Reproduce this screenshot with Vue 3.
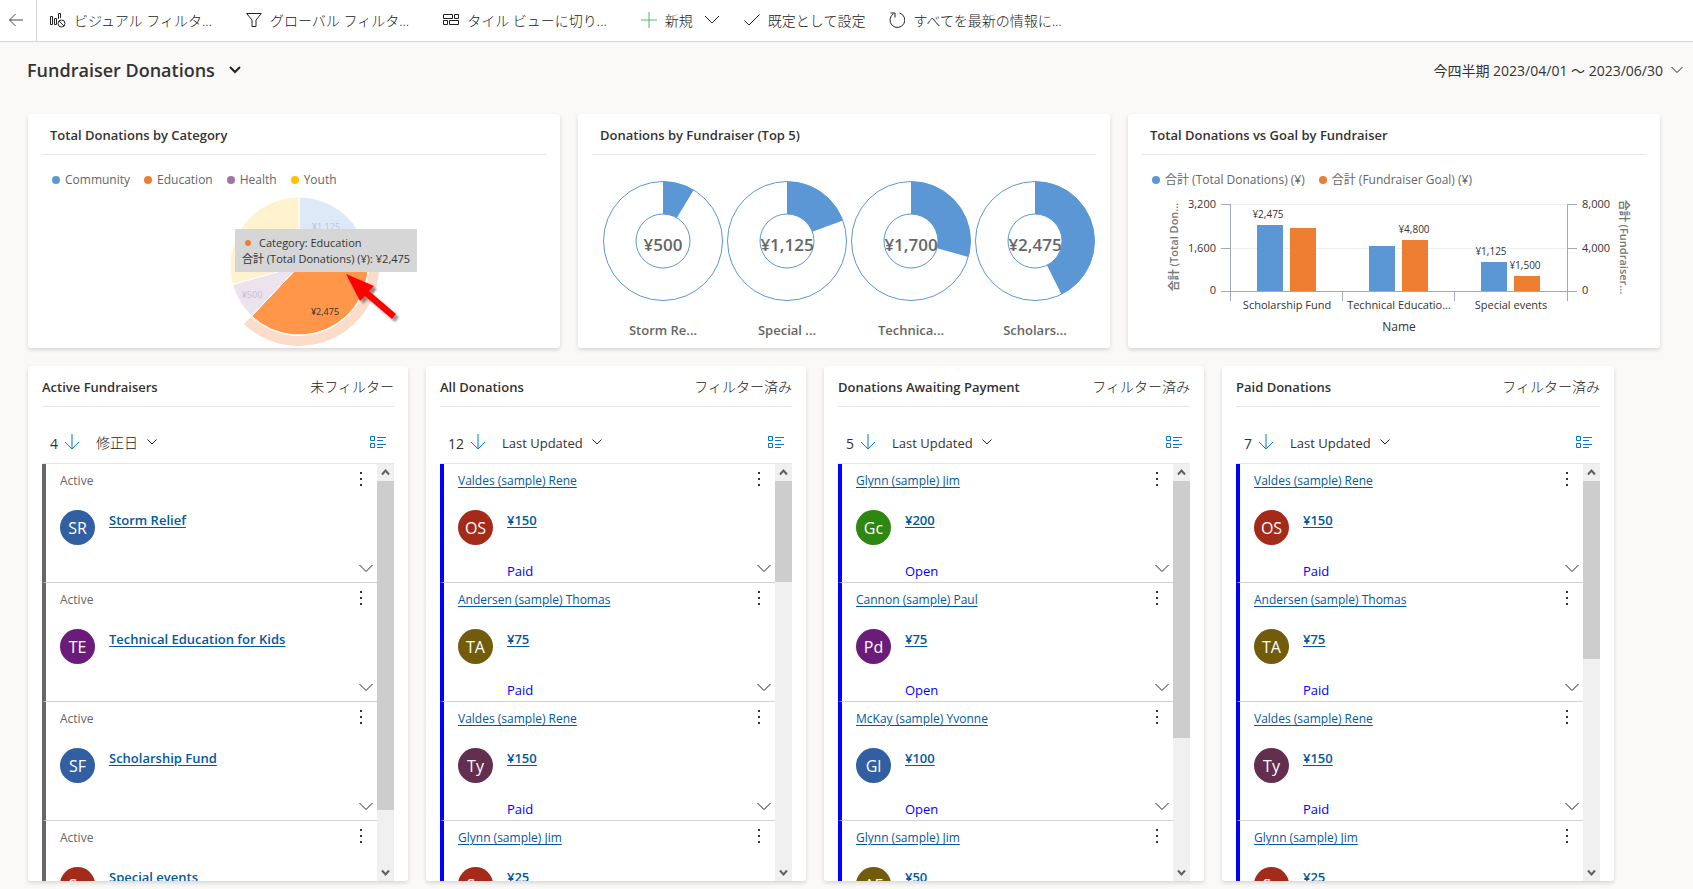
<template>
  <div class="dashboard">
    <nav class="command-bar">
      <button class="back-btn" aria-label="Back">
        <svg width="16" height="14" viewBox="0 0 16 14"><path d="M7.5 1 1.500 7l6 6M1.500 7H15" /></svg>
      </button>
      <button class="command wide">
        <svg width="16" height="16" viewBox="0 0 16 16">
          <path d="M.5 4.500h2v8h-2zM4.500 6.500h2v6h-2zM8.500 7V1.500h2V6" />
          <circle cx="11.500" cy="11.500" r="3.500" />
          <path d="m9 9 5 5" />
        </svg>
        ビジュアル フィルタ...
      </button>
      <button class="command wide">
        <svg width="16" height="16" viewBox="0 0 16 16"><path d="M.7 1.500h14.600L10 8v6.500H6V8z" /></svg>
        グローバル フィルタ...
      </button>
      <button class="command wide">
        <svg width="16" height="16" viewBox="0 0 16 16">
          <path d="M.5 2.500h9v4h-9zM11.500 2.500h4v4h-4zM.5 8.500h4v4h-4zM6.500 8.500h9v4h-9z" />
        </svg>
        タイル ビューに切り...
      </button>
      <button class="command">
        <svg class="plus" width="16" height="16" viewBox="0 0 16 16"><path d="M8 0v16M0 8h16" /></svg>
        新規
        <svg class="more" width="16" height="16" viewBox="0 0 16 16"><path d="m1 4 7 7 7-7" /></svg>
      </button>
      <button class="command">
        <svg width="16" height="16" viewBox="0 0 16 16"><path d="m.5 8.500 4.500 4.500L15.500 2.500" /></svg>
        既定として設定
      </button>
      <button class="command">
        <svg width="16" height="16" viewBox="0 0 16 16">
          <path d="M10.500 1a7.400 7.400 0 1 1-6 .8M1.500 1h4.500v4.500" />
        </svg>
        すべてを最新の情報に...
      </button>
    </nav>

    <header class="page-header">
      <button class="page-title">
        Fundraiser Donations
        <svg width="12" height="12" viewBox="0 0 12 12"><path d="m1 3 5 5 5-5" /></svg>
      </button>
      <button class="period">
        今四半期 2023/04/01 ～ 2023/06/30
        <svg width="12" height="12" viewBox="0 0 12 12"><path d="m.5 2 5.500 5.500L11.500 2" /></svg>
      </button>
    </header>

    <section class="charts">
      <article class="card">
        <h2 class="chart-title">Total Donations by Category</h2>
        <ul class="legend">
          <li v-for="item in categories" :key="item.name">
            <i :style="{ background: item.color }"></i>{{ item.name }}
          </li>
        </ul>
        <div class="pie">
          <svg width="100%" height="159" viewBox="0 0 532 159">
            <defs>
              <filter id="arrow-shadow" x="-20%" y="-20%" width="150%" height="150%">
                <feDropShadow dx="3" dy="3" stdDeviation="1" flood-color="#000" flood-opacity="0.4" />
              </filter>
            </defs>
            <path :d="ring(271, 77, 70, 80, 69.8, 223.4)" fill="#fbdccb" />
            <path
              v-for="slice in slices"
              :key="slice.name"
              :d="ring(271, 77, 0, 69, slice.from, slice.to)"
              :fill="slice.fill"
              stroke="#fff"
            />
            <text class="faded" x="298" y="41">¥1,125</text>
            <text class="faded" x="224" y="109">¥500</text>
            <text x="297" y="126">¥2,475</text>
            <g filter="url(#arrow-shadow)" fill="#f00">
              <path d="m318 85 28 12-5 5 27 23-4 5-27-23-5 5z" />
            </g>
          </svg>
          <div class="tooltip">
            <div class="tooltip-name"><i></i>Category: Education</div>
            <div>合計 (Total Donations) (¥): ¥2,475</div>
          </div>
        </div>
      </article>

      <article class="card">
        <h2 class="chart-title">Donations by Fundraiser (Top 5)</h2>
        <div class="donuts">
          <div v-for="donut in donuts" :key="donut.label" class="donut">
            <svg width="124" height="122" viewBox="0 0 124 122">
              <circle cx="62" cy="61" r="59.500" />
              <circle cx="62" cy="61" r="27" />
              <path :d="ring(62, 61, 27, 59.5, 0, (donut.value / total) * 360)" />
              <text x="62" y="71">{{ yen(donut.value) }}</text>
            </svg>
            <span>{{ donut.label }}</span>
          </div>
        </div>
      </article>

      <article class="card">
        <h2 class="chart-title">Total Donations vs Goal by Fundraiser</h2>
        <ul class="legend">
          <li><i class="blue"></i>合計 (Total Donations) (¥)</li>
          <li><i class="orange"></i>合計 (Fundraiser Goal) (¥)</li>
        </ul>
        <svg class="bars" width="100%" height="159" viewBox="0 0 532 159">
          <path class="grid-line" d="M103 15.500h336M103 59.500h336" />
          <path
            class="axis"
            d="M102.500 15v97M439.500 15v97M93 15.500h10M93 59.500h10M93 102.500h356M439 15.500h10M439 59.500h10M214.500 103v9M326.500 103v9"
          />
          <rect
            v-for="bar in bars"
            :key="bar.x"
            :x="bar.x"
            :y="102 - bar.height"
            width="26"
            :height="bar.height"
            :fill="bar.color"
          />
          <g class="bar-value">
            <text x="140" y="29">¥2,475</text>
            <text x="286" y="44">¥4,800</text>
            <text x="363" y="66">¥1,125</text>
            <text x="397" y="80">¥1,500</text>
          </g>
          <g class="tick end">
            <text x="88" y="19">3,200</text>
            <text x="88" y="63">1,600</text>
            <text x="88" y="105">0</text>
          </g>
          <g class="tick start">
            <text x="454" y="19">8,000</text>
            <text x="454" y="63">4,000</text>
            <text x="454" y="105">0</text>
          </g>
          <g class="tick">
            <text x="159" y="120">Scholarship Fund</text>
            <text x="271" y="120">Technical Educatio...</text>
            <text x="383" y="120">Special events</text>
          </g>
          <text class="axis-name" x="271" y="142">Name</text>
          <text class="axis-title" transform="translate(50 58) rotate(-90)">合計 (Total Don...</text>
          <text class="axis-title" transform="translate(492 58) rotate(90)">合計 (Fundraiser...</text>
        </svg>
      </article>
    </section>

    <section class="streams">
      <article v-for="stream in streams" :key="stream.title" class="card stream">
        <div class="stream-head">
          <h2>{{ stream.title }}</h2>
          <span>{{ stream.filter }}</span>
        </div>
        <div class="sort-row">
          <span class="count">{{ stream.count }}</span>
          <button class="sort-dir" aria-label="Sort direction">
            <svg width="16" height="16" viewBox="0 0 16 16"><path d="M8 0v15M1 8l7 7 7-7" /></svg>
          </button>
          <button class="sort-by">
            <span :class="{ ja: stream.sort === '修正日' }">{{ stream.sort }}</span>
            <svg width="10" height="10" viewBox="0 0 10 10"><path d="m.5 2.500 4.500 4.500 4.500-4.500" /></svg>
          </button>
          <button class="view-btn" aria-label="Change view">
            <svg width="16" height="12" viewBox="0 0 16 12">
              <path d="M.5.500h4v4h-4zM.5 7.500h4v4h-4zM7 1.500h9M7 4.500h6M7 8.500h9M7 11.500h6" />
            </svg>
          </button>
        </div>
        <div class="list">
          <div class="records">
            <div
              v-for="(record, index) in stream.records"
              :key="index"
              class="record"
              :class="{ plain: !record.status }"
            >
              <div class="record-top">
                <a v-if="record.status" href="#">{{ record.who }}</a>
                <span v-else>{{ record.who }}</span>
                <button class="kebab" aria-label="More commands">
                  <svg width="14" height="16" viewBox="0 0 14 16">
                    <path d="M6 0h2v2H6zM6 6h2v2H6zM6 12h2v2H6z" />
                  </svg>
                </button>
              </div>
              <div class="record-main">
                <span class="avatar" :style="{ background: record.color }">{{ record.initials }}</span>
                <a href="#">{{ record.name }}</a>
              </div>
              <div class="record-bottom">
                <span>{{ record.status }}</span>
                <button aria-label="Expand">
                  <svg width="14" height="14" viewBox="0 0 14 14"><path d="m.5 4 6.500 6.500L13.500 4" /></svg>
                </button>
              </div>
            </div>
          </div>
          <div class="scrollbar">
            <svg width="17" height="17" viewBox="0 0 17 17"><path d="m5 10.500 3.500-4 3.500 4" /></svg>
            <div class="track">
              <div class="thumb" :style="{ height: stream.thumb + '%' }"></div>
            </div>
            <svg width="17" height="17" viewBox="0 0 17 17"><path d="m5 6.500 3.500 4 3.500-4" /></svg>
          </div>
        </div>
      </article>
    </section>
  </div>
</template>

<script setup>
import { ref } from "vue";

const total = 5800;

const yen = (value) => "¥" + value.toLocaleString("en-US");

const categories = ref([
  { name: "Community", color: "#5b97d5" },
  { name: "Education", color: "#ed7d31" },
  { name: "Health", color: "#a074a8" },
  { name: "Youth", color: "#ffc000" },
]);

const slices = ref([
  { name: "Community", from: 0, to: 69.8, fill: "#dee9f7" },
  { name: "Education", from: 69.8, to: 223.4, fill: "#ff964a" },
  { name: "Health", from: 223.4, to: 254.5, fill: "#ece3ee" },
  { name: "Youth", from: 254.5, to: 360, fill: "#fff2cf" },
]);

const donuts = ref([
  { label: "Storm Re...", value: 500 },
  { label: "Special ...", value: 1125 },
  { label: "Technica...", value: 1700 },
  { label: "Scholars...", value: 2475 },
]);

const bars = ref([
  { x: 129, height: 66, color: "#5b97d5" },
  { x: 162, height: 63, color: "#ed7d31" },
  { x: 241, height: 45, color: "#5b97d5" },
  { x: 274, height: 51, color: "#ed7d31" },
  { x: 353, height: 29, color: "#5b97d5" },
  { x: 386, height: 15, color: "#ed7d31" },
]);

const blue = "#315fa2";
const purple = "#6b1c7a";
const red = "#a42b1a";
const olive = "#735b0c";
const plum = "#632f4f";
const green = "#2e8712";

const paid = [
  { who: "Valdes (sample) Rene", initials: "OS", name: "¥150", status: "Paid", color: red },
  { who: "Andersen (sample) Thomas", initials: "TA", name: "¥75", status: "Paid", color: olive },
  { who: "Valdes (sample) Rene", initials: "Ty", name: "¥150", status: "Paid", color: plum },
  { who: "Glynn (sample) Jim", initials: "Se", name: "¥25", status: "Paid", color: red },
];

const streams = ref([
  {
    title: "Active Fundraisers",
    filter: "未フィルター",
    count: 4,
    sort: "修正日",
    thumb: 86,
    records: [
      { who: "Active", initials: "SR", name: "Storm Relief", color: blue },
      { who: "Active", initials: "TE", name: "Technical Education for Kids", color: purple },
      { who: "Active", initials: "SF", name: "Scholarship Fund", color: blue },
      { who: "Active", initials: "Se", name: "Special events", color: red },
    ],
  },
  {
    title: "All Donations",
    filter: "フィルター済み",
    count: 12,
    sort: "Last Updated",
    thumb: 26.4,
    records: paid,
  },
  {
    title: "Donations Awaiting Payment",
    filter: "フィルター済み",
    count: 5,
    sort: "Last Updated",
    thumb: 67,
    records: [
      { who: "Glynn (sample) Jim", initials: "Gc", name: "¥200", status: "Open", color: green },
      { who: "Cannon (sample) Paul", initials: "Pd", name: "¥75", status: "Open", color: purple },
      { who: "McKay (sample) Yvonne", initials: "Gl", name: "¥100", status: "Open", color: blue },
      { who: "Glynn (sample) Jim", initials: "AF", name: "¥50", status: "Open", color: olive },
    ],
  },
  {
    title: "Paid Donations",
    filter: "フィルター済み",
    count: 7,
    sort: "Last Updated",
    thumb: 46.5,
    records: paid,
  },
]);

// Sector between two radii, angles in degrees clockwise from 12 o'clock
const ring = (cx, cy, inner, outer, from, to) => {
  const point = (r, deg) => {
    const a = (deg * Math.PI) / 180;
    return `${cx + r * Math.sin(a)} ${cy - r * Math.cos(a)}`;
  };
  const large = to - from > 180 ? 1 : 0;
  return (
    `M${point(inner, from)}L${point(outer, from)}` +
    `A${outer} ${outer} 0 ${large} 1 ${point(outer, to)}` +
    `L${point(inner, to)}` +
    (inner ? `A${inner} ${inner} 0 ${large} 0 ${point(inner, from)}` : "") +
    "Z"
  );
};
</script>

<style>
body {
  background: #faf9f8;
}
</style>

<style scoped>
.dashboard {
  display: flex;
  flex-direction: column;
  height: 100vh;
  color: #333;
  font-family: "Open Sans", "Noto Sans CJK JP", sans-serif;
  font-size: 13px;
}

h2 {
  margin: 0;
  font-size: 13px;
  font-weight: 600;
}

button {
  display: flex;
  align-items: center;
  padding: 0;
  border: none;
  background: none;
  color: inherit;
  font: inherit;
  cursor: pointer;
}

button svg {
  flex: none;
  fill: none;
  stroke: #222;
}

a {
  color: #005a9e;
  text-underline-offset: 2px;
}

.command-bar {
  display: flex;
  flex: none;
  height: 41px;
  background: #fff;
  border-bottom: 1px solid #d6d6d6;
}

.back-btn {
  justify-content: center;
  width: 37px;
  padding: 0 4px 2px 0;
  margin-right: 13px;
  border-right: 1px solid #d6d6d6;
}

.back-btn svg {
  stroke: #444;
}

.command {
  gap: 8px;
  margin-right: 24px;
  padding-bottom: 2px;
  color: #222;
  font-size: 14px;
  font-weight: 300;
  white-space: nowrap;
}

.command.wide {
  margin-right: 34px;
}

.command .plus {
  stroke: #4db679;
}

.command .more {
  margin-left: 3px;
}

.page-header {
  display: flex;
  flex: none;
  justify-content: space-between;
  align-items: flex-start;
  height: 56px;
  padding: 16px 10px 0 27px;
}

.page-title {
  gap: 14px;
  font-size: 18px;
  font-weight: 600;
  line-height: 24px;
}

.page-title svg {
  stroke-width: 2;
}

.period {
  gap: 8px;
  font-size: 14px;
  line-height: 26px;
}

.card {
  background: #fff;
  border-radius: 3px;
  box-shadow: 0 2px 4px rgba(0, 0, 0, 0.14);
}

.charts {
  display: grid;
  flex: none;
  grid-template-columns: repeat(3, 1fr);
  gap: 18px;
  padding: 0 33px 18px 28px;
}

.chart-title {
  height: 40px;
  margin: 0 14px;
  padding: 0 8px;
  line-height: 42px;
  border-bottom: 1px solid #e6e6e6;
}

.legend {
  display: flex;
  gap: 14px;
  margin: 0;
  padding: 16px 24px 0;
  color: #666;
  font-size: 12px;
  line-height: 18px;
  list-style: none;
}

.legend li {
  display: flex;
  align-items: center;
  gap: 5px;
}

.legend i {
  width: 8px;
  height: 8px;
  border-radius: 50%;
}

.legend .blue {
  background: #5b97d5;
}

.legend .orange {
  background: #ed7d31;
}

.card svg {
  display: block;
}

.pie {
  position: relative;
}

.pie text {
  fill: #333;
  font-size: 9px;
  text-anchor: middle;
}

.pie .faded {
  fill: #c3c3c8;
}

.tooltip {
  position: absolute;
  top: 40px;
  left: calc(50% - 59px);
  padding: 6px 7px 5px 7px;
  background: #d6d6d6;
  font-size: 11px;
  line-height: 16px;
  white-space: nowrap;
}

.tooltip-name {
  display: flex;
  align-items: center;
}

.tooltip-name i {
  width: 6px;
  height: 6px;
  margin: 0 8px 0 3px;
  border-radius: 50%;
  background: #ed7d31;
}

.donuts {
  display: grid;
  grid-template-columns: repeat(4, 1fr);
  padding: 25px 13px 8px 23px;
}

.donut {
  display: flex;
  flex-direction: column;
  align-items: center;
  gap: 18px;
  color: #666;
  font-weight: 600;
  line-height: 20px;
}

.donut circle {
  fill: none;
  stroke: #5b97d5;
}

.donut path {
  fill: #5b97d5;
}

.donut text {
  fill: #666;
  font-size: 17px;
  text-anchor: middle;
}

.bars text {
  fill: #333;
  text-anchor: middle;
}

.bars .grid-line {
  stroke: #eee;
}

.bars .axis {
  fill: none;
  stroke: #a3a8b7;
}

.bars .bar-value text {
  font-size: 10px;
}

.bars .tick text {
  font-size: 11px;
}

.bars .end text {
  text-anchor: end;
}

.bars .start text {
  text-anchor: start;
}

.bars .axis-name {
  font-size: 12px;
}

.bars .axis-title {
  fill: #777;
  font-size: 11px;
  font-weight: 600;
}

.streams {
  display: grid;
  flex: 1;
  grid-template-columns: 380fr 380fr 380fr 392fr;
  gap: 18px;
  min-height: 0;
  padding: 0 79px 8px 28px;
}

.stream {
  display: flex;
  flex-direction: column;
  min-width: 0;
  min-height: 0;
  padding: 0 14px;
}

.stream-head {
  display: flex;
  justify-content: space-between;
  height: 40px;
  line-height: 42px;
  border-bottom: 1px solid #e6e6e6;
}

.stream-head span {
  color: #222;
  font-size: 14px;
  font-weight: 300;
}

.sort-row {
  display: flex;
  flex: none;
  align-items: center;
  height: 38px;
  padding: 16px 8px 2px;
  border-bottom: 1px solid #e6e6e6;
}

.count {
  padding-top: 2px;
  font-size: 14px;
}

.sort-dir {
  margin: 0 16px 0 6px;
}

.sort-by {
  gap: 9px;
}

.sort-by span {
  padding-top: 2px;
}

.sort-by .ja {
  padding-top: 0;
  color: #222;
  font-size: 14px;
  font-weight: 300;
}

.view-btn {
  margin-left: auto;
}

.sort-dir svg,
.view-btn svg {
  stroke: #0078d4;
}

.list {
  display: flex;
  flex: 1;
  min-height: 0;
  overflow: hidden;
}

.records {
  flex: 1;
  min-width: 0;
}

.record {
  padding: 8px 4px 1px 14px;
  border-left: 4px solid #00f;
  border-bottom: 1px solid #d2d2d2;
}

.record.plain {
  border-left-color: #666;
}

.record-top {
  display: flex;
  justify-content: space-between;
  height: 18px;
  padding-right: 5px;
  color: #666;
  font-size: 12px;
  line-height: 18px;
}

.kebab {
  align-self: flex-start;
}

.kebab svg {
  fill: #333;
  stroke: none;
}

.record-main {
  display: flex;
  gap: 14px;
  height: 35px;
  margin: 20px 0 16px;
  font-weight: 600;
  line-height: 20px;
}

.avatar {
  width: 35px;
  border-radius: 50%;
  color: #fff;
  font-size: 16px;
  font-weight: 400;
  line-height: 36px;
  text-align: center;
}

.record-bottom {
  display: flex;
  justify-content: space-between;
  align-items: flex-start;
  height: 20px;
  padding-left: 49px;
  color: #00f;
  line-height: 20px;
}

.scrollbar {
  display: flex;
  flex-direction: column;
  width: 17px;
  background: #f0f0f0;
}

.scrollbar svg {
  flex: none;
  fill: none;
  stroke: #606060;
  stroke-width: 2;
}

.track {
  flex: 1;
}

.thumb {
  background: #cdcdcd;
}
</style>
